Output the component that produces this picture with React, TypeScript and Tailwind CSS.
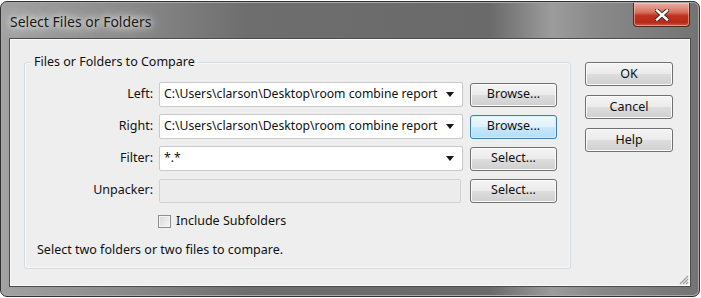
import type { ReactNode } from "react";

const font = { fontFamily: '"Noto Sans", "Open Sans", sans-serif' };

function Arrow() {
  return (
    <svg width="8" height="5" viewBox="0 0 8 5" className="shrink-0">
      <path d="M0 0h8L4 5z" fill="#1a1a1a" />
    </svg>
  );
}

function Combo({ value, disabled }: { value?: string; disabled?: boolean }) {
  return (
    <div
      className={
        disabled
          ? "flex h-[24px] w-[302px] items-center rounded-[2px] border border-[#d2d2d2] bg-[#ececec]"
          : "flex h-[25px] w-[304px] items-center rounded-[2px] border border-[#c9c9c9] bg-white pl-[4px] pr-[8px]"
      }
    >
      {!disabled && (
        <>
          <span className="flex-1 truncate text-[12.2px] text-[#111]">{value}</span>
          <Arrow />
        </>
      )}
    </div>
  );
}

function Btn({ children, focused, w = "w-[87px]" }: { children: ReactNode; focused?: boolean; w?: string }) {
  return (
    <button
      type="button"
      className={
        `${w} flex h-[24px] items-center justify-center rounded-[3px] border text-[12.5px] text-[#111] ` +
        (focused
          ? "border-[#3c7fb1] bg-[linear-gradient(180deg,#f0f9fe_0%,#dff1fc_48%,#c6e8fc_52%,#b5ddf7_100%)] shadow-[inset_0_0_0_1px_#d6effc]"
          : "border-[#707070] bg-[linear-gradient(180deg,#f4f4f4_0%,#ebebeb_48%,#dddddd_52%,#cfcfcf_100%)] shadow-[inset_0_0_0_1px_#fbfbfb]")
      }
    >
      {children}
    </button>
  );
}

function Row({ label, children, button }: { label: string; children: ReactNode; button: ReactNode }) {
  return (
    <div className="flex h-[25px] items-center">
      <span className="w-[134px] pr-[6px] text-right text-[12.5px] text-[#111]">{label}</span>
      {children}
      <div className="ml-[7px]">{button}</div>
    </div>
  );
}

export default function App() {
  const path = "C:\\Users\\clarson\\Desktop\\room combine report";
  return (
    <div className="h-[298px] w-[701px] bg-white pt-[1px]" style={font}>
      <div className="flex h-[296px] w-[700px] flex-col rounded-[7px] border border-[#2f2f2f] bg-[linear-gradient(90deg,#a2a2a2_0%,#8a8a8a_18%,#6e6e6e_35%,#6a6a6a_70%,#9c9c9c_79%,#8a8a8a_85%,#737373_100%)] shadow-[inset_0_0_0_1px_#a9a9a9]">
        <div className="flex h-[36px] items-start">
          <span className="ml-[9px] mt-[9px] text-[14px] text-[#1a1a1a] [text-shadow:0_0_6px_#ffffff,0_0_12px_rgba(255,255,255,0.9),0_0_20px_rgba(255,255,255,0.7)]">
            Select Files or Folders
          </span>
          <div className="ml-auto mr-[9px] mt-[1px] flex h-[24px] w-[57px] items-center justify-center rounded-b-[4px] border border-t-0 border-[#4a2a24] bg-[linear-gradient(180deg,#e8b0a4_0%,#d8705e_40%,#c0321e_55%,#b52a18_85%,#d0604a_100%)] shadow-[inset_0_0_0_1px_rgba(255,210,200,0.5)]">
            <svg width="14" height="12" viewBox="0 0 14 12">
              <path
                d="M2 1.5L12 10.5M12 1.5L2 10.5"
                stroke="#3a2420"
                strokeWidth="4.2"
                strokeLinecap="square"
              />
              <path d="M2 1.5L12 10.5M12 1.5L2 10.5" stroke="#ffffff" strokeWidth="2.4" strokeLinecap="square" />
            </svg>
          </div>
        </div>
        <div className="mx-[8px] mb-[9px] flex flex-1 border border-[#4c4c4c] bg-[#eeeeee] shadow-[inset_0_0_0_1px_#fafafa]">
          <div className="relative ml-[14px] mt-[23px] h-[207px] w-[547px] rounded-[3px] border border-[#d3dde3] shadow-[inset_0_0_0_1px_#f8f8f8]">
            <span className="absolute -top-[10px] left-[6px] bg-[#eeeeee] px-[3px] text-[12.5px] text-[#111]">
              Files or Folders to Compare
            </span>
            <div className="mt-[19px] flex flex-col gap-[7px]">
              <Row label="Left:" button={<Btn>Browse...</Btn>}>
                <Combo value={path} />
              </Row>
              <Row label="Right:" button={<Btn focused>Browse...</Btn>}>
                <Combo value={path} />
              </Row>
              <Row label="Filter:" button={<Btn>Select...</Btn>}>
                <Combo value="*.*" />
              </Row>
              <div className="flex h-[25px] items-center">
                <span className="w-[134px] pr-[6px] text-right text-[12.5px] text-[#111]">Unpacker:</span>
                <Combo disabled />
                <div className="ml-[9px]">
                  <Btn>Select...</Btn>
                </div>
              </div>
            </div>
            <div className="ml-[133px] mt-[9px] flex items-center gap-[5px]">
              <span className="h-[13px] w-[13px] border border-[#8e8f8f] bg-[linear-gradient(135deg,#d8d8d8,#f6f6f6)] shadow-[inset_0_0_0_1px_#f4f4f4]" />
              <span className="text-[12.5px] text-[#111]">Include Subfolders</span>
            </div>
            <div className="ml-[12px] mt-[10px] text-[12.5px] text-[#111]">Select two folders or two files to compare.</div>
          </div>
          <div className="ml-[14px] mt-[23px] flex flex-col gap-[9px]">
            <Btn w="w-[88px]">OK</Btn>
            <Btn w="w-[88px]">Cancel</Btn>
            <Btn w="w-[88px]">Help</Btn>
          </div>
          <div className="ml-auto flex items-end">
            <svg width="12" height="12" viewBox="0 0 12 12" className="mb-[1px] mr-[1px]">
              <path d="M11 3L3 11M11 6L6 11M11 9L9 11" stroke="#a0a0a0" strokeWidth="1.2" />
            </svg>
          </div>
        </div>
      </div>
    </div>
  );
}
